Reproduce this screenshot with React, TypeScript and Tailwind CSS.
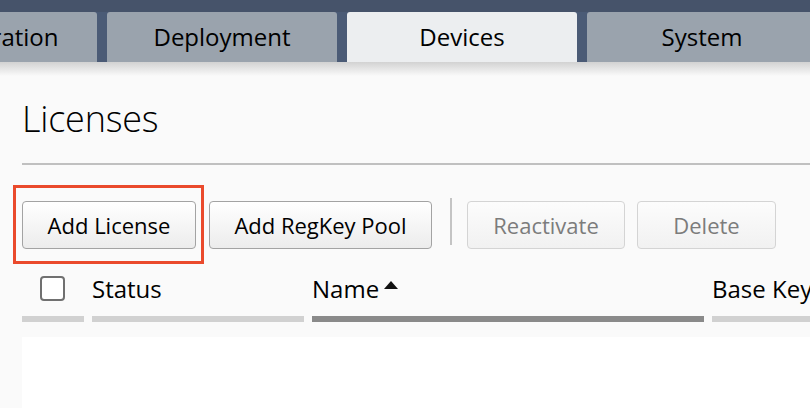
import { useState } from 'react';

const tabs = ['Configuration', 'Deployment', 'Devices', 'System'];

export default function App() {
  const [active] = useState('Devices');

  return (
    <div className="w-[810px] h-[408px] overflow-hidden bg-[#fafafa] font-['Open_Sans',sans-serif] text-black">
      {/* tab bar */}
      <div className="h-[12px] bg-[#46536a]" />
      <div className="flex gap-[10px] bg-[#4b5b76] ml-[-133px] w-[1100px]">
        {tabs.map((t) => (
          <div
            key={t}
            className={
              'w-[230px] h-[50px] shrink-0 rounded-t-[3px] flex items-center justify-center text-[24px] ' +
              (t === active ? 'bg-[#eceef0]' : 'bg-[#9aa3ad]')
            }
          >
            {t}
          </div>
        ))}
      </div>
      <div className="h-[14px] bg-gradient-to-b from-[#d2d2d2] to-[#fafafa]" />

      <div className="pl-[22px]">
        <h1 className="text-[36px] font-light leading-[44px] mt-[21px] tracking-[-0.2px]">Licenses</h1>
        <div className="h-[2px] bg-[#c0c0c0] mt-[22px]" />

        {/* toolbar */}
        <div className="flex items-center mt-[36px] h-[48px]">
          <div className="relative">
            <button className="w-[174px] h-[48px] rounded-[4px] border border-[#a3a3a3] bg-gradient-to-b from-white to-[#ececec] text-[22px] text-black">
              Add License
            </button>
            <span className="absolute left-[-9px] top-[-16px] w-[191px] h-[79px] border-[3px] border-[#ea4a2c] pointer-events-none" />
          </div>
          <button className="ml-[13px] w-[223px] h-[48px] rounded-[4px] border border-[#a3a3a3] bg-gradient-to-b from-white to-[#ececec] text-[22px] text-black">
            Add RegKey Pool
          </button>
          <div className="ml-[18px] w-[2px] h-[47px] bg-[#c4c4c4] self-start mt-[-3px]" />
          <button className="ml-[15px] w-[158px] h-[48px] rounded-[4px] border border-[#d4d4d4] bg-gradient-to-b from-[#fcfcfc] to-[#f1f1f1] text-[22px] text-[#7c7c7c]">
            Reactivate
          </button>
          <button className="ml-[12px] w-[139px] h-[48px] rounded-[4px] border border-[#d4d4d4] bg-gradient-to-b from-[#fcfcfc] to-[#f1f1f1] text-[22px] text-[#7c7c7c]">
            Delete
          </button>
        </div>

        {/* table header */}
        <div className="flex mt-[27px] w-[900px]">
          <div className="w-[62px] flex flex-col">
            <div className="h-[26px] flex items-start pl-[18px]">
              <span className="w-[25px] h-[25px] rounded-[4px] border-2 border-[#707070] bg-white" />
            </div>
            <div className="mt-[14px] h-[6px] bg-[#d1d1d1]" />
          </div>
          <div className="ml-[8px] w-[212px] flex flex-col">
            <div className="h-[26px] text-[24px] leading-[26px]">Status</div>
            <div className="mt-[14px] h-[6px] bg-[#d1d1d1]" />
          </div>
          <div className="ml-[8px] w-[392px] flex flex-col">
            <div className="h-[26px] text-[24px] leading-[26px] flex items-center gap-[5px]">
              Name
              <svg width="14" height="8" viewBox="0 0 14 8" className="mb-[8px]">
                <path d="M0 8 L7 0 L14 8 Z" fill="#111" />
              </svg>
            </div>
            <div className="mt-[14px] h-[6px] bg-[#8a8a8a]" />
          </div>
          <div className="ml-[8px] w-[200px] flex flex-col">
            <div className="h-[26px] text-[24px] leading-[26px] whitespace-nowrap">Base Key</div>
            <div className="mt-[14px] h-[6px] bg-[#d1d1d1]" />
          </div>
        </div>

        <div className="mt-[15px] h-[100px] bg-white" />
      </div>
    </div>
  );
}
